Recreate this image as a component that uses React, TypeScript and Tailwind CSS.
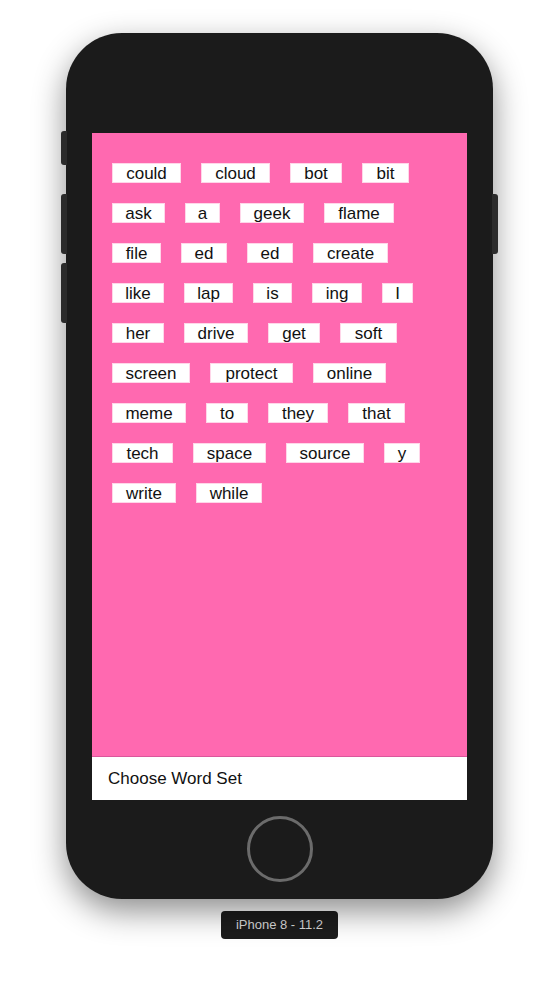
// word tags with the widths measured off the simulator
const rows: [string, string][][] = [
  [['could', 'w-[69px]'], ['cloud', 'w-[69px]'], ['bot', 'w-[52px]'], ['bit', 'w-[47px]']],
  [['ask', 'w-[53px]'], ['a', 'w-[35px]'], ['geek', 'w-[64px]'], ['flame', 'w-[70px]']],
  [['file', 'w-[49px]'], ['ed', 'w-[46px]'], ['ed', 'w-[46px]'], ['create', 'w-[75px]']],
  [['like', 'w-[52px]'], ['lap', 'w-[49px]'], ['is', 'w-[39px]'], ['ing', 'w-[50px]'], ['I', 'w-[31px]']],
  [['her', 'w-[52px]'], ['drive', 'w-[64px]'], ['get', 'w-[52px]'], ['soft', 'w-[57px]']],
  [['screen', 'w-[78px]'], ['protect', 'w-[83px]'], ['online', 'w-[73px]']],
  [['meme', 'w-[74px]'], ['to', 'w-[42px]'], ['they', 'w-[60px]'], ['that', 'w-[57px]']],
  [['tech', 'w-[61px]'], ['space', 'w-[73px]'], ['source', 'w-[78px]'], ['y', 'w-[36px]']],
  [['write', 'w-[64px]'], ['while', 'w-[66px]']],
];

const Word = ({ text, width }: { text: string; width: string }) => (
  <span
    className={`box-border flex h-5 items-center justify-center border border-[#ffd6e9] bg-white pt-px text-[17px] leading-[17px] text-[#111] ${width}`}
  >
    {text}
  </span>
);

const App = () => {
  return (
    <div className="flex min-h-[981px] w-full flex-col items-center bg-white pt-[33px] font-['Liberation_Sans',Arial,sans-serif]">
      <div className="relative flex h-[866px] w-[427px] flex-col items-center rounded-[56px] bg-[#1b1b1b] pt-[100px] shadow-[0_12px_32px_rgba(0,0,0,0.45)]">
        {/* side buttons */}
        <span className="absolute left-[-5px] top-[98px] h-[34px] w-[6px] rounded-l-[3px] bg-[#2b2b2b]" />
        <span className="absolute left-[-5px] top-[161px] h-[60px] w-[6px] rounded-l-[3px] bg-[#2b2b2b]" />
        <span className="absolute left-[-5px] top-[230px] h-[60px] w-[6px] rounded-l-[3px] bg-[#2b2b2b]" />
        <span className="absolute right-[-5px] top-[161px] h-[60px] w-[6px] rounded-r-[3px] bg-[#2b2b2b]" />

        <div className="flex h-[667px] w-[375px] flex-col bg-[#ff69b0]">
          <div className="flex flex-1 flex-col gap-5 px-5 pt-[30px]">
            {rows.map((row, i) => (
              <div key={i} className="flex gap-5">
                {row.map(([w, cls], j) => (
                  <Word key={j} text={w} width={cls} />
                ))}
              </div>
            ))}
          </div>
          <div className="flex h-[44px] items-center border-t border-[#d9579b] bg-white px-4 pt-px text-[17px] text-[#111]">
            Choose Word Set
          </div>
        </div>

        <div className="mt-4 h-[66px] w-[66px] rounded-full border-[3px] border-[#6b6b6b]" />
      </div>

      <div className="mt-3 flex h-7 w-[117px] items-center justify-center rounded-[4px] bg-[#1c1c1c] text-[13px] text-[#d8d8d8]">
        iPhone 8 - 11.2
      </div>
    </div>
  );
};

export default App;
